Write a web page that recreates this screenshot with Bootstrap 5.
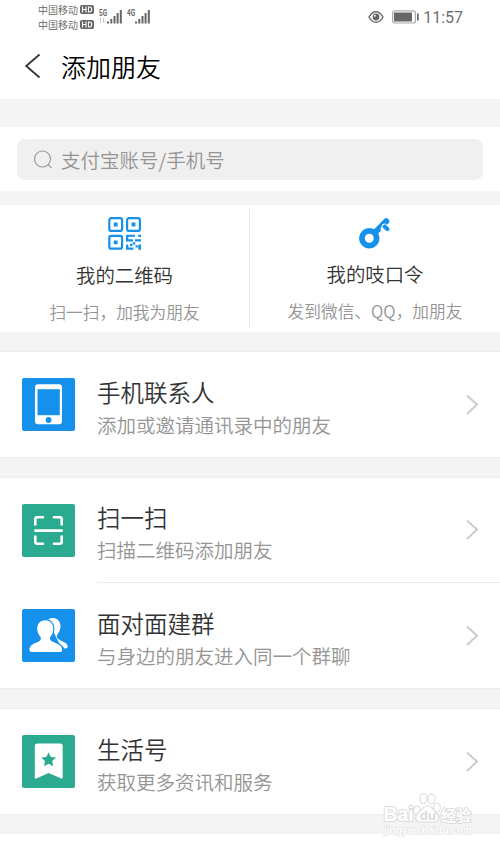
<!DOCTYPE html>
<html lang="zh-CN">
<head>
<meta charset="utf-8">
<meta name="viewport" content="width=device-width, initial-scale=1">
<title>添加朋友</title>
<link href="https://cdn.jsdelivr.net/npm/bootstrap@5.3.0/dist/css/bootstrap.min.css" rel="stylesheet">
<style>
body{font-family:"Noto Sans CJK SC",sans-serif;font-weight:350;background:#f4f4f4;color:#333;min-height:847px;overflow-x:hidden}
svg{display:block;flex:none}
.status-bar{height:34px;padding:0 37px 0 38px;color:#666}
.carrier{font-size:10px;line-height:15px;color:#606060}
.hd-tag{width:14px;height:9px;margin-left:2px}
.clock{font:16px/20px Roboto,sans-serif;color:#707070;padding-top:1px}
.title-bar{height:65px;padding:0 0 1px 24px}
.title-bar h1{font-size:25px;line-height:36px;color:#000;margin:0 0 1px 20px;font-weight:inherit}
.search-area{margin-top:28px;height:64px;padding:12px 17px 11px 17px}
.search-box{height:41px;background:#f0f0f0;border-radius:8px;padding-left:16px;color:#949494;font-size:19.5px;line-height:28px}
.search-box span{margin-left:9px}
.tiles{margin-top:14px;height:127px;padding:4px 0}
.tile{padding-top:7px;width:249px}
.tile + .tile{border-left:1px solid #e8e8e8;width:251px}
.tile-name{font-size:19.4px;line-height:28px;margin-top:11px}
.tile-note{font-size:16.7px;line-height:24px;margin-top:11px;color:#949494}
.tile + .tile .tile-name{margin-top:10px}
.group{margin-top:21px;box-shadow:0 -1px #ededed,0 1px #ededed}
.tiles + .group{margin-top:20px}
.entry{height:105px;padding:0 21px 0 22px}
.entry-body{height:100%;margin-left:22px;padding-top:23px}
.entry-name{font-size:23.5px;line-height:34px}
.entry-note{font-size:19.5px;line-height:28px;margin-top:2px;color:#949494}
.group-pair .entry{height:104px}
.group-pair .entry-body{padding-top:22px}
.group-pair .entry + .entry{height:106px;padding-top:1px}
.entry + .entry .entry-body{box-shadow:0 -1px #ececec;padding-top:23px;margin-right:-21px;padding-right:21px}
.page-end{margin-top:20px;height:13px}
.watermark{position:absolute;left:382px;top:791px}
</style>
<script src="https://cdn.jsdelivr.net/npm/bootstrap@5.3.0/dist/js/bootstrap.bundle.min.js"></script>
</head>
<body>
<header class="bg-white">
  <div class="status-bar d-flex align-items-center justify-content-between">
    <div class="d-flex align-items-center">
      <div>
        <div class="carrier d-flex align-items-center">中国移动<svg class="hd-tag" viewBox="0 0 14 9"><rect width="14" height="9" rx="2" fill="#666"/><path d="M2.500 1.500v6M6 1.500v6M2.500 4.500H6M8.500 2v5h1.300q1.900 0 1.900-2.500T9.800 2z" fill="none" stroke="#fff" stroke-width="1.100"/></svg></div>
        <div class="carrier d-flex align-items-center">中国移动<svg class="hd-tag" viewBox="0 0 14 9"><rect width="14" height="9" rx="2" fill="#666"/><path d="M2.500 1.500v6M6 1.500v6M2.500 4.500H6M8.500 2v5h1.300q1.900 0 1.900-2.500T9.800 2z" fill="none" stroke="#fff" stroke-width="1.100"/></svg></div>
      </div>
      <svg width="56" height="18" viewBox="0 0 56 18" class="ms-1" font-family="Roboto,sans-serif" font-weight="700" font-size="9" fill="#666">
        <text x="1" y="8" textLength="8" lengthAdjust="spacingAndGlyphs">5G</text>
        <text x="29" y="8" textLength="8" lengthAdjust="spacingAndGlyphs">4G</text>
        <path d="M2.500 15v-5L1 11.500M5.500 10v5L7 13.500" fill="none" stroke="#bbb" stroke-width=".8"/>
        <path d="M9 13.500h2v2H9zM12.300 11h2v4.500h-2zM15.500 8h2v7.500h-2zM18.600 5h2v10.500h-2zM21.800 2h2v13.500h-2z"/>
        <path d="M37 13.500h2v2h-2zM40.300 11h2v4.500h-2zM43.500 8h2v7.500h-2zM46.600 5h2v10.500h-2zM49.800 2h2v13.500h-2z"/>
      </svg>
    </div>
    <div class="d-flex align-items-center">
      <svg width="16" height="14" viewBox="0 0 16 14" class="me-1"><path d="M1 7q3-5.300 7-5.300T15 7q-3 5.300-7 5.300T1 7z" fill="none" stroke="#666" stroke-width="1.400"/><circle cx="8" cy="7" r="3.400" fill="#666"/><circle cx="6.800" cy="5.700" r="1" fill="#fff"/></svg>
      <svg width="27" height="14" viewBox="0 0 27 14" class="ms-1"><rect x=".6" y=".8" width="22.800" height="12.200" rx="2" fill="#fff" stroke="#aaa" stroke-width="1.200"/><path d="M2 2.500h18v9H2zM25 3.500h1.700v7H25z" fill="#666"/></svg>
      <span class="clock ms-1">11:57</span>
    </div>
  </div>
  <div class="title-bar d-flex align-items-center">
    <svg width="17" height="26" viewBox="0 0 17 26"><path d="M15.500 1.500 2.200 13l13.300 11.500" fill="none" stroke="#333" stroke-width="1.800"/></svg>
    <h1>添加朋友</h1>
  </div>
</header>

<section class="search-area bg-white">
  <div class="search-box d-flex align-items-center">
    <svg width="19" height="19" viewBox="0 0 19 19"><g fill="none" stroke="#999" stroke-width="1.200"><circle cx="9.500" cy="9" r="8"/><path d="m15.200 14.700 3.300 3.300"/></g></svg>
    <span>支付宝账号/手机号</span>
  </div>
</section>

<section class="tiles bg-white d-flex">
  <div class="tile d-flex flex-column align-items-center">
    <svg width="34" height="34" viewBox="0.500 0 34 34"><g fill="none" stroke="#1590eb" stroke-width="2.200"><rect x="1.800" y="2.100" width="12.800" height="12.800" rx="2"/><rect x="19.600" y="2.100" width="12.800" height="12.800" rx="2"/><rect x="1.800" y="19.900" width="12.800" height="12.800" rx="2"/></g><path fill="#1590eb" d="M6.300 6.600h3.800v3.800H6.300zM24.100 6.600h3.800v3.800h-3.800zM6.300 24.400h3.800v3.800H6.300zM18.500 18.800h9v2h-6.700v2.500h4.700v2.200h-7zM30.800 18.800h2.700v2.200h-2.700zM27.500 23.200h6v2.300h-6zM25.300 26.200h2.500v2.300h-2.500zM18.500 28.500h2.300v3h5.200v2.300h-7.500zM22.500 27.800h2.500V30h-2.500zM28 29.300h2.300v2.300H28zM30.800 28.500h2.700v5.300h-2.700z"/></svg>
    <div class="tile-name">我的二维码</div>
    <div class="tile-note">扫一扫，加我为朋友</div>
  </div>
  <div class="tile d-flex flex-column align-items-center">
    <svg width="34" height="34" viewBox="0 0 34 34"><g fill="none" stroke="#1590eb" stroke-linecap="round"><circle cx="11.300" cy="22.300" r="7.400" stroke-width="5.800"/><path d="m17 16.500 11.200-11.200" stroke-width="6"/></g><path d="m22.200 13.500 2.300-5.200q3-1.600 4.400.5l3.500 3.700-5 4z" fill="#fff"/><path d="M25 11.600q-.6-2 1-2.600l1.600-.2 3 3.200q1.300 1.600-.1 2.500-1.300.7-2.500-.3z" fill="#1590eb" stroke="#1590eb" stroke-width=".8"/></svg>
    <div class="tile-name">我的吱口令</div>
    <div class="tile-note">发到微信、QQ，加朋友</div>
  </div>
</section>

<section class="group bg-white">
  <div class="entry d-flex align-items-center">
    <svg width="53" height="53" viewBox="0 0 53 53"><rect width="53" height="53" rx="2" fill="#1590eb"/><rect x="13" y="6.300" width="27" height="40" rx="3" fill="#fff"/><path d="M15.500 11.200h22.300v26H15.500z" fill="#1590eb"/><circle cx="26.600" cy="42" r="2.900" fill="#1590eb"/></svg>
    <div class="entry-body flex-grow-1 d-flex justify-content-between">
      <div><div class="entry-name">手机联系人</div><div class="entry-note">添加或邀请通讯录中的朋友</div></div>
      <svg width="13" height="60" viewBox="0 0 13 60"><path d="m1 20.500 10 9-10 9.500" fill="none" stroke="#ccc" stroke-width="2"/></svg>
    </div>
  </div>
</section>

<section class="group group-pair bg-white">
  <div class="entry d-flex align-items-center">
    <svg width="53" height="53" viewBox="0 0 53 53"><rect width="53" height="53" rx="2" fill="#2aab8f"/><path d="M13.300 20.500v-5.200q0-2 2-2H21M32 13.300h5.700q2 0 2 2v5.200M13.300 32.500v5.200q0 2 2 2H21M32 39.700h5.700q2 0 2-2v-5.200M13.300 26.600h26.500" fill="none" stroke="#fff" stroke-width="2.600" stroke-linecap="round"/></svg>
    <div class="entry-body flex-grow-1 d-flex justify-content-between">
      <div><div class="entry-name">扫一扫</div><div class="entry-note">扫描二维码添加朋友</div></div>
      <svg width="13" height="60" viewBox="0 0 13 60"><path d="m1 20.500 10 9-10 9.500" fill="none" stroke="#ccc" stroke-width="2"/></svg>
    </div>
  </div>
  <div class="entry d-flex align-items-center">
    <svg width="53" height="53" viewBox="0 0 53 53"><rect width="53" height="53" rx="2" fill="#1590eb"/><path d="M25.500 10.500C32 6.500 38.500 10.500 38.500 17c0 4-1.700 6.700-3.300 8.800-1 2.200-.2 3.700 2.500 5.200 4 2.200 8 3.200 8 6.500 0 1.500-1 2-3 2.100L37 34z" fill="#fff"/><path d="M23.200 11.200c5.300 0 8.100 3.800 8.100 8.500 0 3.700-1.500 6.300-3 8.300-.8 2.200-.1 3.600 3.200 5 4.500 1.800 8.700 3.600 8.700 7.500 0 1.800-.9 2.500-2.400 2.500H9.800c-1.600 0-2.400-.8-2.400-2.500 0-3.900 4.200-5.800 8.300-7.500 3.200-1.300 3.800-3 2.700-5.200-1.700-2.200-3.200-4.500-3.200-8.100 0-5 3.200-8.500 8-8.500z" fill="#fff" stroke="#1590eb" stroke-width="2.400" paint-order="stroke"/></svg>
    <div class="entry-body flex-grow-1 d-flex justify-content-between">
      <div><div class="entry-name">面对面建群</div><div class="entry-note">与身边的朋友进入同一个群聊</div></div>
      <svg width="13" height="60" viewBox="0 0 13 60"><path d="m1 20.500 10 9-10 9.500" fill="none" stroke="#ccc" stroke-width="2"/></svg>
    </div>
  </div>
</section>

<section class="group bg-white">
  <div class="entry d-flex align-items-center">
    <svg width="53" height="53" viewBox="0 0 53 53"><rect width="53" height="53" rx="2" fill="#2aab8f"/><path d="M15.500 8.500h22.700q2.500 0 2.500 2.500v31.500q0 1.500-1.500 1L26.600 38l-12.300 5.500q-1.500.500-1.500-1V11q0-2.500 2.700-2.500z" fill="#fff"/><path d="m26.600 17.200 2.200 4.700 5.200.7-3.800 3.500.9 5.200-4.500-2.500-4.500 2.500.9-5.200-3.800-3.500 5.200-.7z" fill="#2aab8f"/></svg>
    <div class="entry-body flex-grow-1 d-flex justify-content-between">
      <div><div class="entry-name">生活号</div><div class="entry-note">获取更多资讯和服务</div></div>
      <svg width="13" height="60" viewBox="0 0 13 60"><path d="m1 20.500 10 9-10 9.500" fill="none" stroke="#ccc" stroke-width="2"/></svg>
    </div>
  </div>
</section>
<div class="page-end bg-white"></div>

<svg class="watermark" width="96" height="48" viewBox="0 0 96 48" fill="#fff" stroke="#dcdcdc" stroke-linejoin="round">
  <g stroke-width="1.200"><ellipse cx="35" cy="19.500" rx="3.300" ry="4.700"/><ellipse cx="41.500" cy="7.500" rx="3.500" ry="5"/><ellipse cx="49.500" cy="8" rx="3.500" ry="4.800"/><ellipse cx="55" cy="16.500" rx="3.300" ry="4.500"/><path d="M45.500 14.500c4 0 5 4 8 6.500 5 4 4 10-1 10H38c-5 0-6-6-1-10 3.500-2.500 4.500-6.500 8.500-6.500z"/></g>
  <g font-family="Liberation Sans,sans-serif" font-weight="700" paint-order="stroke"><text x="1.500" y="30" font-size="20" stroke-width="2" textLength="30" lengthAdjust="spacingAndGlyphs">Bai</text><text x="38" y="29" font-size="13" fill="#d8d8d8" stroke="none">du</text><text x="2" y="43" font-size="10.500" stroke-width="1.200" stroke="#e0e0e0" textLength="88" lengthAdjust="spacingAndGlyphs">jingyan.baidu.com</text></g>
  <text x="59" y="29.500" font-family="Noto Sans CJK SC,sans-serif" font-weight="700" font-size="15" stroke-width="2" paint-order="stroke">经验</text>
</svg>
</body>
</html>
